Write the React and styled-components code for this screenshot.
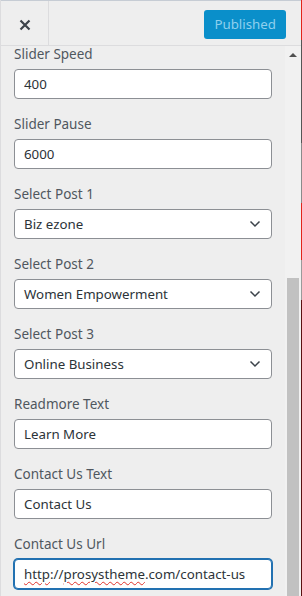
import styled, { createGlobalStyle } from "styled-components";

const GlobalStyle = createGlobalStyle`
  html, body {
    margin: 0;
    padding: 0;
    background: #eeeeee;
  }
  body {
    font-family: "Noto Sans", "Open Sans", sans-serif;
  }
  * {
    box-sizing: border-box;
  }
`;

const Frame = styled.div`
  width: 302px;
  height: 596px;
  display: flex;
  overflow: hidden;
  background: #eeeeee;
  border-left: 1px solid #dcdcde;
`;

const Main = styled.div`
  flex: 1;
  display: flex;
  flex-direction: column;
  min-width: 0;
`;

const EdgeStrip = styled.div`
  width: 1px;
  background: linear-gradient(
    to bottom,
    #e2231a 0px,
    #e2231a 40px,
    #555555 40px,
    #555555 143px,
    #8a8a8a 143px,
    #8a8a8a 203px,
    #e2231a 203px,
    #e2231a 260px,
    #9a9a9a 260px,
    #9a9a9a 300px,
    #5a1010 300px,
    #5a1010 100%
  );
`;

const Header = styled.header`
  height: 46px;
  display: flex;
  align-items: stretch;
  border-top: 1px solid #c6ccd4;
  border-bottom: 1px solid #dcdcde;
  background: #eeeeee;
`;

const CloseButton = styled.button`
  width: 48px;
  border: none;
  border-right: 1px solid #dcdcde;
  background: transparent;
  display: flex;
  align-items: center;
  justify-content: center;
  padding: 3px 0 0 1px;
  cursor: pointer;
`;

const HeaderSpacer = styled.div`
  flex: 1;
`;

const PublishButton = styled.button`
  align-self: center;
  margin: 3px 15px 0 0;
  height: 29px;
  padding: 0 10px;
  border: none;
  border-radius: 3px;
  background: #0a8fca;
  color: #8fd0ee;
  font-family: "Noto Sans", "Open Sans", sans-serif;
  font-size: 13.3px;
  line-height: 29px;
  cursor: default;
`;

const Body = styled.div`
  flex: 1;
  display: flex;
  min-height: 0;
`;

const Controls = styled.div`
  flex: 1;
  padding: 0 13px 0 13px;
  overflow: hidden;
`;

const Field = styled.div`
  display: flex;
  flex-direction: column;
  margin-bottom: 17px;
`;

const Label = styled.label`
  display: block;
  font-size: 13.5px;
  line-height: 16px;
  color: #50575e;
  margin-bottom: 7px;
`;

const TextInput = styled.input`
  width: 100%;
  height: 30px;
  padding: 0 9px;
  border: 1px solid #8c8f94;
  border-radius: 4px;
  background: #ffffff;
  color: #2c3338;
  font-family: "Noto Sans", "Open Sans", sans-serif;
  font-size: 13.3px;
  outline: none;
`;

const FocusedInput = styled.div`
  height: 30px;
  padding: 0 9px;
  border: 1px solid #2271b1;
  box-shadow: 0 0 0 1px #2271b1;
  border-radius: 4px;
  background: #ffffff;
  color: #2c3338;
  font-size: 13.3px;
  line-height: 28px;
  white-space: nowrap;
  overflow: hidden;
`;

const Misspelled = styled.span`
  text-decoration: underline wavy #e0322a;
  text-decoration-thickness: 1px;
  text-underline-offset: 2px;
`;

const SelectBox = styled.div`
  height: 30px;
  padding: 0 10px 0 9px;
  border: 1px solid #8c8f94;
  border-radius: 4px;
  background: #ffffff;
  color: #2c3338;
  font-size: 13.3px;
  display: flex;
  align-items: center;
  justify-content: space-between;
`;

const Scrollbar = styled.div`
  width: 16px;
  background: #f1f1f1;
  display: flex;
  flex-direction: column;
  align-items: center;
`;

const ArrowUp = styled.div`
  margin-top: 7px;
  width: 0;
  height: 0;
  border-left: 4px solid transparent;
  border-right: 4px solid transparent;
  border-bottom: 4px solid #505050;
`;

const Track = styled.div`
  flex: 1;
  width: 100%;
  display: flex;
  flex-direction: column;
  justify-content: flex-end;
  padding: 0 2px 0 2px;
`;

const Thumb = styled.div`
  height: 318px;
  background: #c1c1c1;
`;

const Chevron = () => (
  <svg width="12" height="8" viewBox="0 0 12 8">
    <path d="M1.5 1.5 L6 6 L10.5 1.5" fill="none" stroke="#3c434a" strokeWidth="1.5" />
  </svg>
);

const CloseIcon = () => (
  <svg width="12" height="12" viewBox="0 0 12 12">
    <path d="M1.5 1.5 L10.5 10.5 M10.5 1.5 L1.5 10.5" stroke="#3c434a" strokeWidth="2.2" />
  </svg>
);

const fields = [
  { label: "Slider Speed", type: "text", value: "400" },
  { label: "Slider Pause", type: "text", value: "6000" },
  { label: "Select Post 1", type: "select", value: "Biz ezone" },
  { label: "Select Post 2", type: "select", value: "Women Empowerment" },
  { label: "Select Post 3", type: "select", value: "Online Business" },
  { label: "Readmore Text", type: "text", value: "Learn More" },
  { label: "Contact Us Text", type: "text", value: "Contact Us" },
];

const App = () => {
  return (
    <>
      <GlobalStyle />
      <Frame>
        <Main>
          <Header>
            <CloseButton aria-label="Close">
              <CloseIcon />
            </CloseButton>
            <HeaderSpacer />
            <PublishButton disabled>Published</PublishButton>
          </Header>
          <Body>
            <Controls>
              {fields.map((f) => (
                <Field key={f.label}>
                  <Label>{f.label}</Label>
                  {f.type === "select" ? (
                    <SelectBox>
                      <span>{f.value}</span>
                      <Chevron />
                    </SelectBox>
                  ) : (
                    <TextInput type="text" defaultValue={f.value} readOnly />
                  )}
                </Field>
              ))}
              <Field>
                <Label>Contact Us Url</Label>
                <FocusedInput>
                  <Misspelled>http</Misspelled>://<Misspelled>prosystheme</Misspelled>.com/contact-us
                </FocusedInput>
              </Field>
            </Controls>
            <Scrollbar>
              <ArrowUp />
              <Track>
                <Thumb />
              </Track>
            </Scrollbar>
          </Body>
        </Main>
        <EdgeStrip />
      </Frame>
    </>
  );
};

export default App;
